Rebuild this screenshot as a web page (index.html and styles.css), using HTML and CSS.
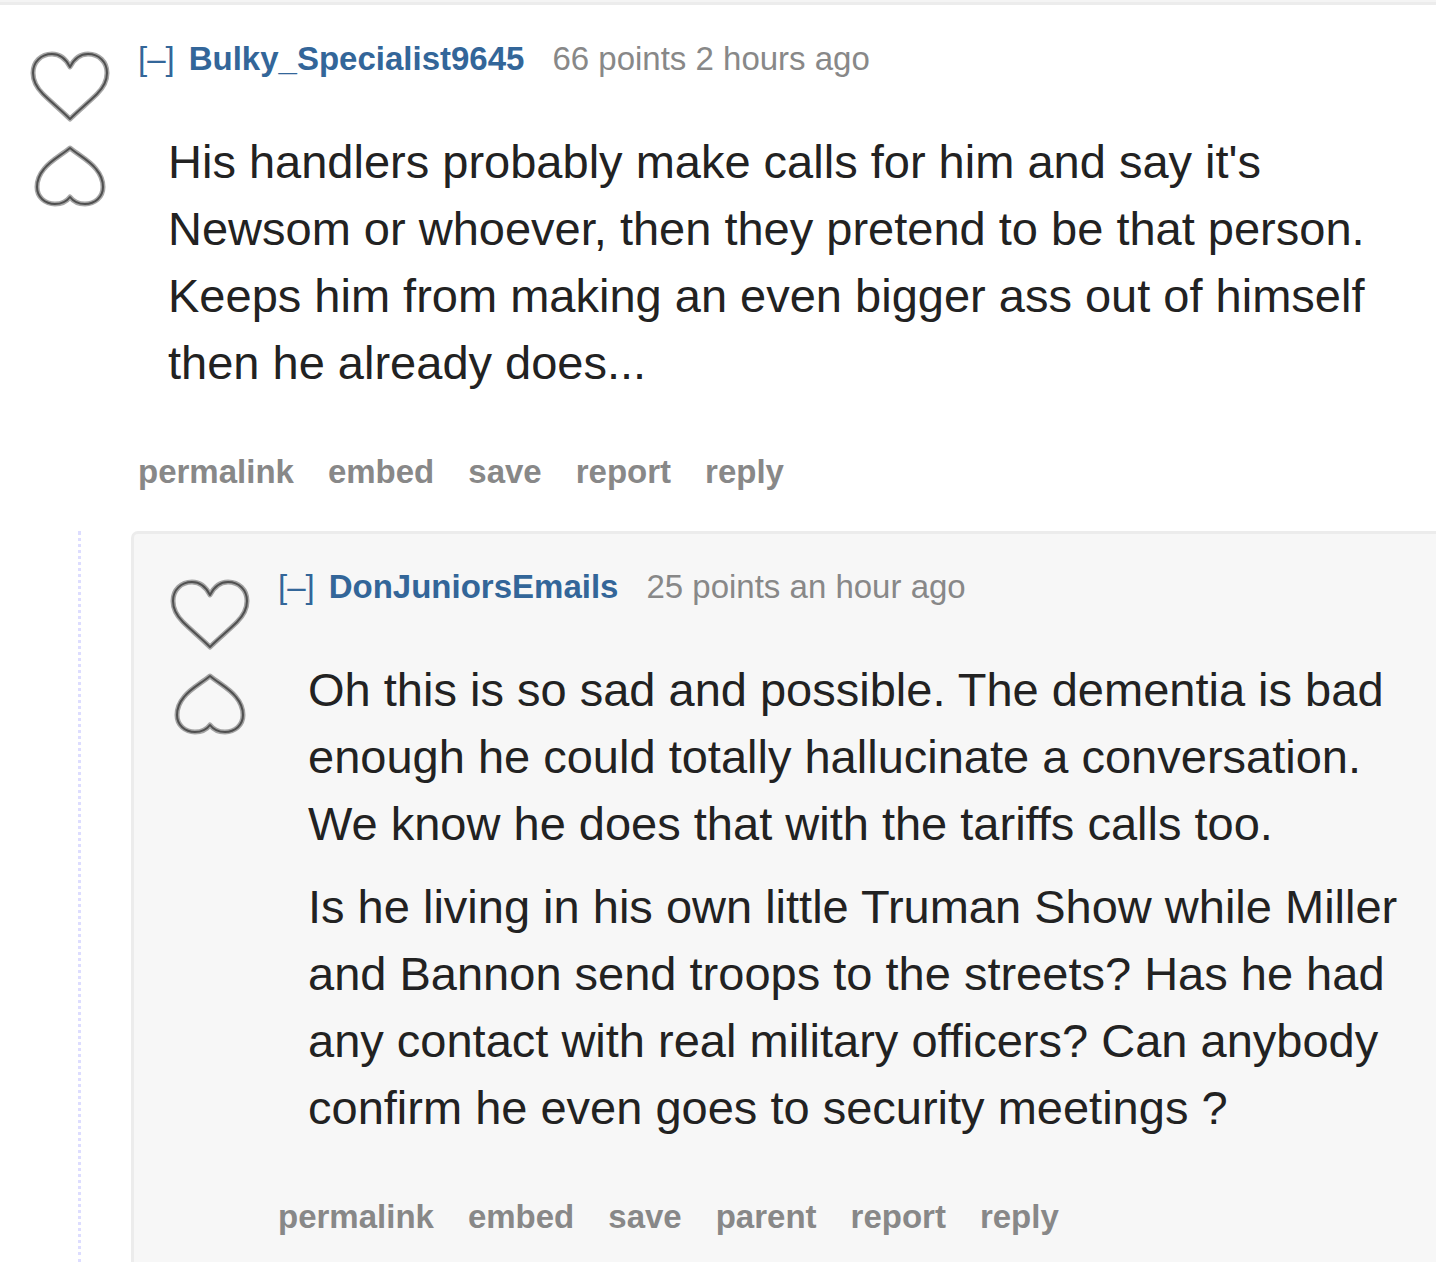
FILE: index.html
```
<!DOCTYPE html>
<html lang="en">
<head>
  <meta charset="UTF-8">
  <meta name="viewport" content="width=device-width, initial-scale=1.0">
  <title>Comments</title>
  <link rel="stylesheet" href="styles.css">
</head>
<body>
  <!-- shared vote icons -->
  <svg class="icons" aria-hidden="true">
    <symbol id="heart-up" viewBox="28 48 84 78">
      <path d="M70 67C66 59 60 54 52 54C41 54 33 62 33 73C33 83 38 89 43 94C51 102 61 110 70 119C79 110 89 102 97 94C102 89 107 83 107 73C107 62 99 54 88 54C80 54 74 59 70 67Z"/>
    </symbol>
    <symbol id="heart-down" viewBox="28 142 84 70">
      <path d="M70 148C60 156 50 161 44 169C39 175 37 180 37 187C37 197 45 204 55 204C62 204 67 201 70 197C73 201 78 204 85 204C95 204 103 197 103 187C103 180 101 175 96 169C90 161 80 156 70 148Z"/>
    </symbol>
  </svg>

  <main class="thread">
    <article class="comment">
      <div class="row">
        <div class="votes">
          <button type="button" aria-label="upvote">
            <svg width="84" height="78"><use class="soft" href="#heart-up"/><use class="line" href="#heart-up"/></svg>
          </button>
          <button type="button" aria-label="downvote">
            <svg width="84" height="70"><use class="soft" href="#heart-down"/><use class="line" href="#heart-down"/></svg>
          </button>
        </div>
        <div class="entry">
          <p class="tagline">
            <a class="expand" href="#">[–]</a>
            <a class="author" href="#">Bulky_Specialist9645</a>
            <span>66 points 2 hours ago</span>
          </p>
          <div class="md">
            <p>His handlers probably make calls for him and say it's Newsom or whoever, then they pretend to be that person. Keeps him from making an even bigger ass out of himself then he already does...</p>
          </div>
          <ul class="buttons">
            <li><a href="#">permalink</a></li>
            <li><a href="#">embed</a></li>
            <li><a href="#">save</a></li>
            <li><a href="#">report</a></li>
            <li><a href="#">reply</a></li>
          </ul>
        </div>
      </div>

      <div class="replies">
        <article class="comment nested">
          <div class="row">
            <div class="votes">
              <button type="button" aria-label="upvote">
                <svg width="84" height="78"><use class="soft" href="#heart-up"/><use class="line" href="#heart-up"/></svg>
              </button>
              <button type="button" aria-label="downvote">
                <svg width="84" height="70"><use class="soft" href="#heart-down"/><use class="line" href="#heart-down"/></svg>
              </button>
            </div>
            <div class="entry">
              <p class="tagline">
                <a class="expand" href="#">[–]</a>
                <a class="author" href="#">DonJuniorsEmails</a>
                <span>25 points an hour ago</span>
              </p>
              <div class="md">
                <p>Oh this is so sad and possible. The dementia is bad enough he could totally hallucinate a conversation. We know he does that with the tariffs calls too.</p>
                <p>Is he living in his own little Truman Show while Miller and Bannon send troops to the streets? Has he had any contact with real military officers? Can anybody confirm he even goes to security meetings ?</p>
              </div>
              <ul class="buttons">
                <li><a href="#">permalink</a></li>
                <li><a href="#">embed</a></li>
                <li><a href="#">save</a></li>
                <li><a href="#">parent</a></li>
                <li><a href="#">report</a></li>
                <li><a href="#">reply</a></li>
              </ul>
            </div>
          </div>
        </article>
      </div>
    </article>
  </main>
</body>
</html>
```
FILE: styles.css
```
* {
  box-sizing: border-box;
  margin: 0;
  padding: 0;
}
body {
  font-family: "Liberation Sans", Arial, sans-serif;
  font-size: 33px;
  line-height: 38px;
  color: #888;
  background: #fff;
}
a {
  color: #369;
  text-decoration: none;
}
.icons {
  display: none;
}
.thread {
  border-top: 2px solid #f4f4f4;
}
.comment {
  border-top: 3px solid #ececec;
  padding-top: 35px;
}
.row {
  display: flex;
  gap: 26px;
  padding: 0 20px 0 28px;
}

/* votes */
.votes {
  display: flex;
  flex-direction: column;
  flex-shrink: 0;
  gap: 16px;
  padding-top: 8px;
}
.votes button {
  border: 0;
  background: none;
  cursor: pointer;
}
.votes svg {
  display: block;
  fill: none;
  stroke-linejoin: round;
}
.soft {
  stroke: rgba(80, 80, 80, 0.5);
  stroke-width: 5px;
}
.line {
  stroke: #505050;
  stroke-width: 2px;
}

/* comment body */
.entry {
  flex: 1;
}
.tagline {
  display: flex;
  flex-wrap: wrap;
}
.expand {
  margin-right: 14px;
}
.author {
  font-weight: bold;
  margin-right: 28px;
}
.md {
  margin: 50px 0 57px;
  padding-left: 30px;
  font-size: 47px;
  line-height: 67px;
  color: #222;
}
.md p + p {
  margin-top: 16px;
}
.buttons {
  display: flex;
  flex-wrap: wrap;
  gap: 34px;
  list-style: none;
}
.buttons a {
  color: #888;
  font-weight: bold;
}

/* nested replies */
.replies {
  margin: 40px 0 0 78px;
  padding-left: 50px;
  border-left: 3px dotted #ddf;
}
.nested {
  border-left: 3px solid #ececec;
  border-radius: 7px 0 0 0;
  background: #f7f7f7;
  padding: 34px 0 27px;
}
.nested > .row {
  padding-left: 34px;
}
```
